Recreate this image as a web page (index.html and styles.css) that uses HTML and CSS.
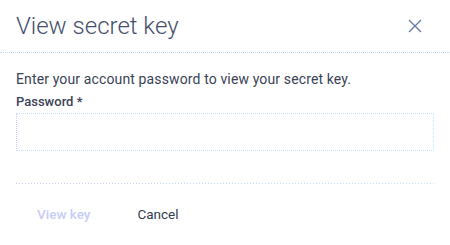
FILE: index.html
```html
<!DOCTYPE html>
<html lang="en">
<head>
<meta charset="utf-8">
<title>View secret key</title>
<link rel="stylesheet" href="styles.css">
</head>
<body>
<div class="dialog">
  <header class="dialog-header">
    <h1 class="dialog-title">View secret key</h1>
    <button class="close-btn" type="button" aria-label="Close">
      <svg width="14" height="14" viewBox="0 0 14 14" aria-hidden="true">
        <path d="M1 1 L13 13 M13 1 L1 13" stroke="#6677a3" stroke-width="1.3" fill="none"/>
      </svg>
    </button>
  </header>
  <div class="dialog-body">
    <p class="intro">Enter your account password to view your secret key.</p>
    <label class="field-label" for="pw">Password *</label>
    <input class="field-input" id="pw" type="password">
    <div class="divider"></div>
    <div class="actions">
      <button class="btn btn-primary" type="button" disabled>View key</button>
      <button class="btn btn-secondary" type="button">Cancel</button>
    </div>
  </div>
</div>
</body>
</html>
```

FILE: styles.css
```css
html, body {
  margin: 0;
  padding: 0;
  background: #ffffff;
}

body {
  font-family: Roboto, "Liberation Sans", sans-serif;
  color: #3a4257;
}

.dialog {
  width: 450px;
  height: 245px;
  display: flex;
  flex-direction: column;
}

.dialog-header {
  height: 52px;
  display: flex;
  align-items: center;
  justify-content: space-between;
  padding: 0 15px 0 16px;
  border-bottom: 1px dotted #c6d3fb;
  box-sizing: content-box;
}

.dialog-title {
  margin: 0 0 1px 0;
  font-size: 24px;
  font-weight: 300;
  color: #454f6b;
  letter-spacing: 0;
}

.close-btn {
  width: 40px;
  height: 40px;
  border: 0;
  background: transparent;
  padding: 0;
  display: flex;
  align-items: center;
  justify-content: center;
}

.dialog-body {
  padding: 16px 16px 0 16px;
  display: flex;
  flex-direction: column;
}

.intro {
  margin: 0;
  font-size: 14px;
  line-height: 20px;
  letter-spacing: 0.13px;
  color: #3b4256;
}

.field-label {
  margin-top: 4px;
  font-size: 13px;
  line-height: 18px;
  font-weight: 500;
  color: #3b4256;
}

.field-input {
  margin: 2px 0 0 0;
  height: 38px;
  box-sizing: border-box;
  width: 100%;
  border: 1px dotted #c9cffa;
  border-right-color: #b8eafa;
  border-top-color: #c2ddfa;
  border-bottom-color: #c2ddfa;
  background: #fff;
  outline: none;
  font-family: inherit;
  font-size: 14px;
  padding: 0 10px;
}

.divider {
  margin-top: 32px;
  height: 1px;
  background: linear-gradient(90deg, #c8cdf8, #bce9f8);
  -webkit-mask-image: repeating-linear-gradient(90deg, #000 0 1px, transparent 1px 3px);
  mask-image: repeating-linear-gradient(90deg, #000 0 1px, transparent 1px 3px);
}

.actions {
  margin-top: 12px;
  display: flex;
  gap: 5px;
}

.btn {
  height: 36px;
  padding: 0 21px;
  border: 0;
  background: transparent;
  font-family: inherit;
  font-size: 13.5px;
}

.btn-primary {
  font-weight: 500;
  color: #c5cdf8;
}

.btn-secondary {
  font-weight: 400;
  color: #323b50;
}
```
